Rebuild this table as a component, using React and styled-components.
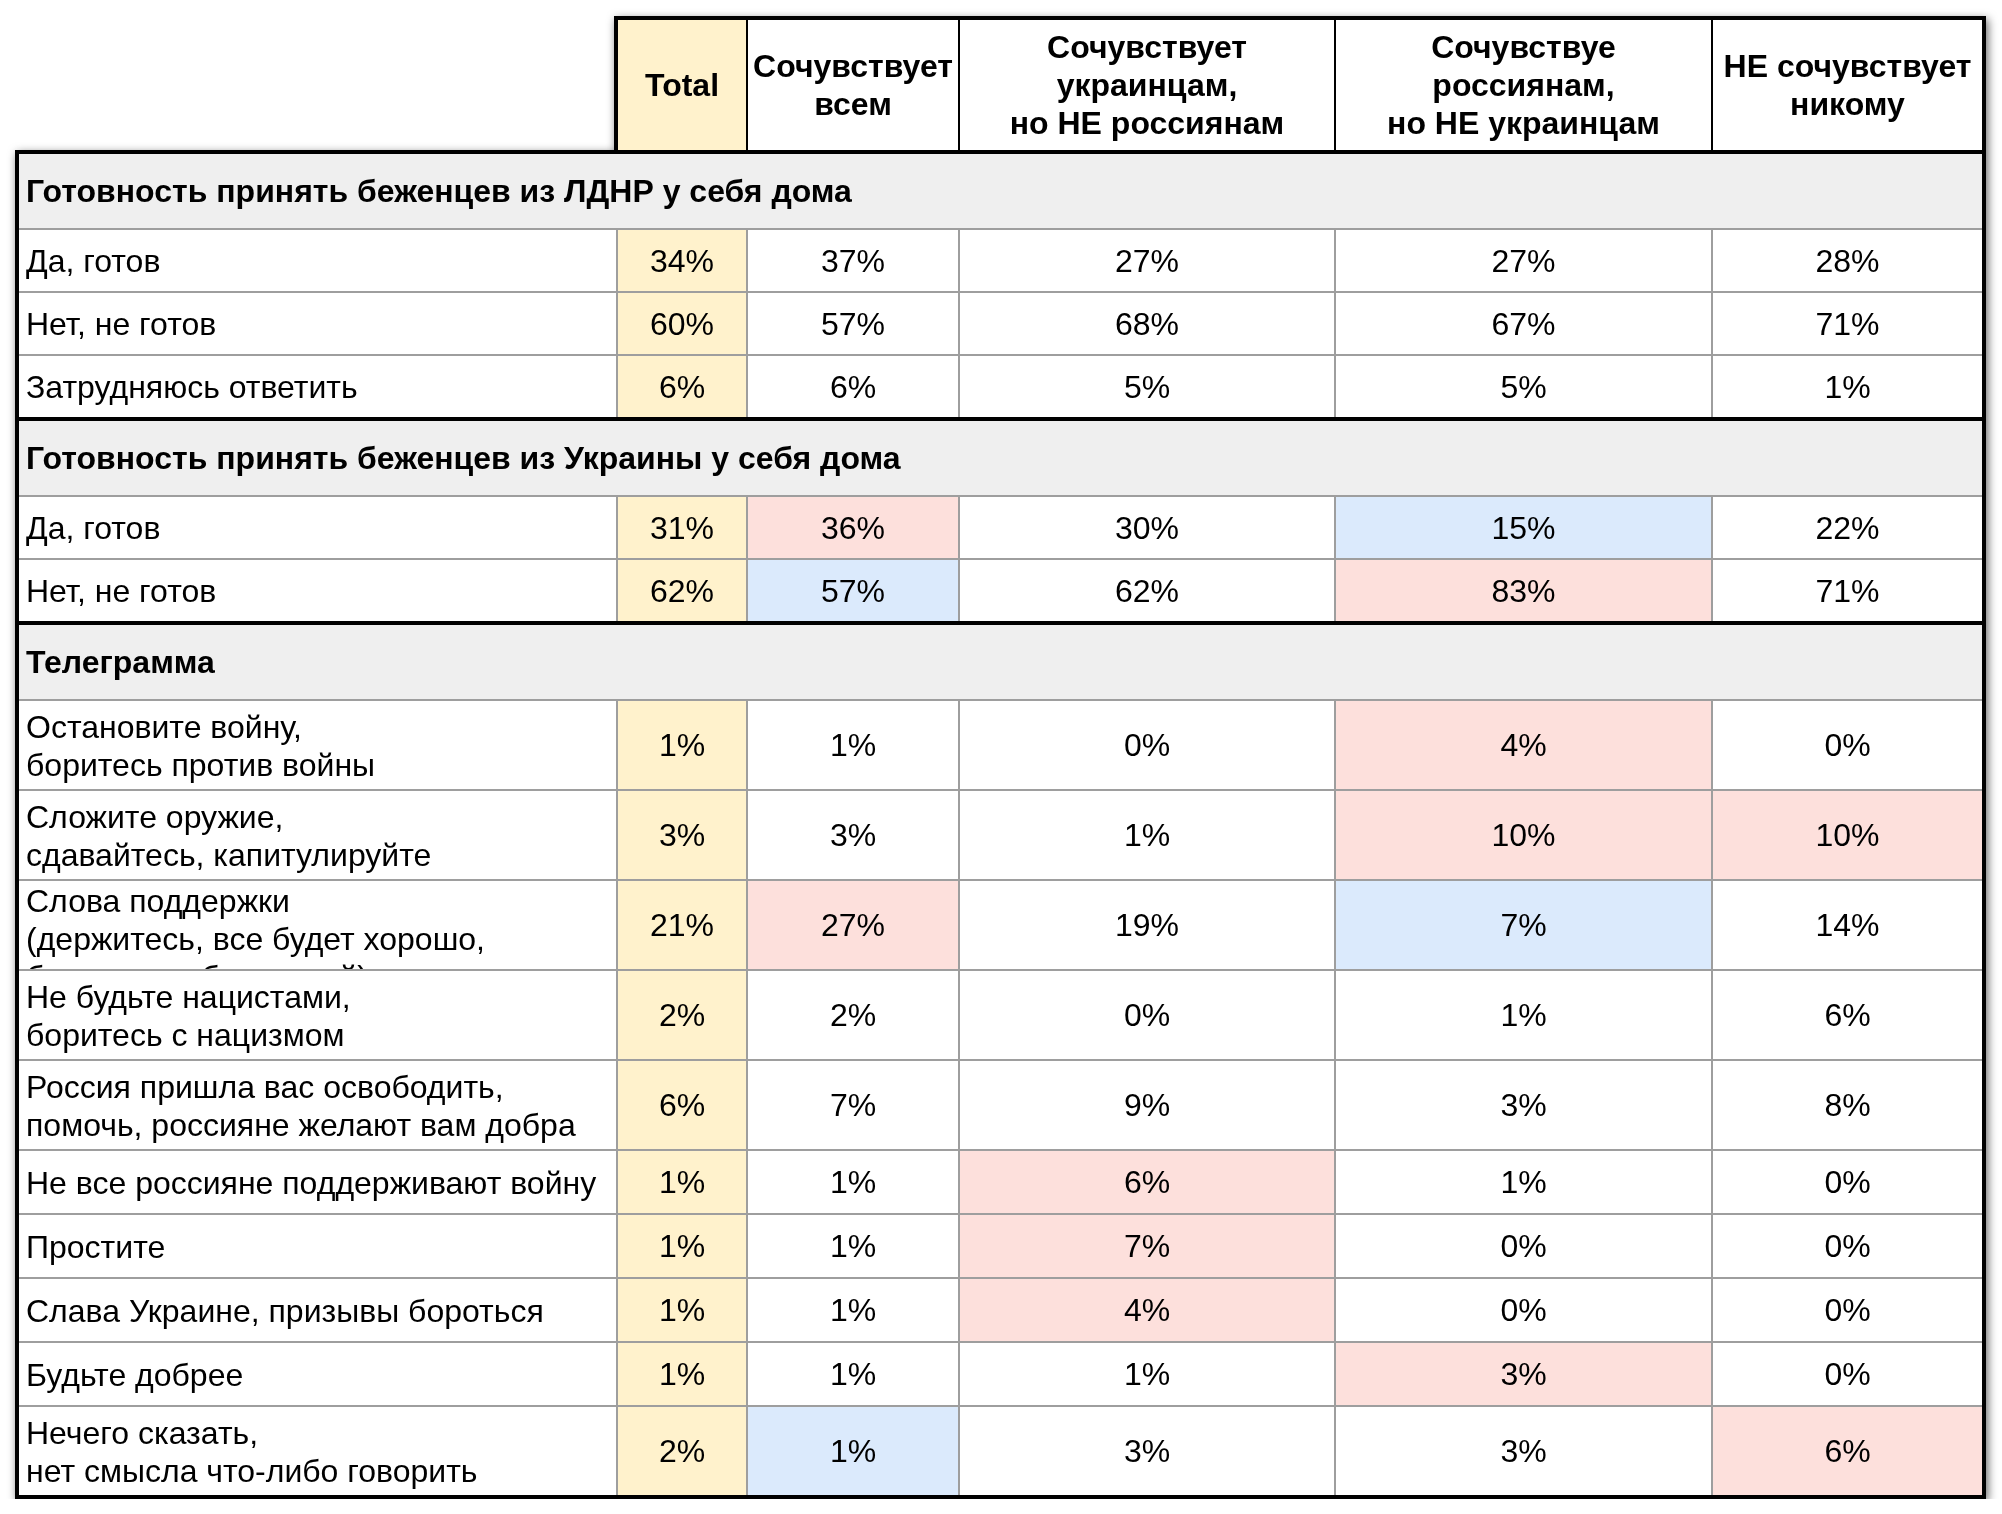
import styled, { createGlobalStyle } from "styled-components";

const GlobalStyle = createGlobalStyle`
  html, body {
    margin: 0;
    padding: 0;
    background: #fff;
  }
  body {
    font-family: "Liberation Sans", Arial, sans-serif;
    color: #000;
  }
`;

const COLS = "597px 130px 212px 376px 377px 271px";
const GRID = "#9e9e9e";

const TONES = {
  total: "#fff2cc",
  pink: "#fde0dc",
  blue: "#dbeafc",
};

const Page = styled.div`
  padding: 16px 0 0 15px;
`;

const Frame = styled.div`
  display: flex;
  flex-direction: column;
  align-items: flex-start;
  width: fit-content;
  filter: drop-shadow(2px 3px 5px rgba(0, 0, 0, 0.6));
`;

const HeaderBox = styled.div`
  margin-left: 599px;
  display: grid;
  grid-template-columns: 128px 212px 376px 377px 271px;
  height: 134px;
  box-sizing: border-box;
  border: 4px solid #000;
  border-bottom: none;
  background: #fff;
`;

const HeadCell = styled.div`
  display: flex;
  align-items: center;
  justify-content: center;
  text-align: center;
  font-size: 32px;
  line-height: 38px;
  font-weight: 700;
  white-space: nowrap;
  overflow: hidden;
  background: ${(p) => (p.$total ? TONES.total : "#fff")};
  & + & {
    border-left: 2px solid #000;
  }
`;

const Table = styled.div`
  width: 1971px;
  box-sizing: border-box;
  border: 4px solid #000;
  background: #fff;
`;

const SectionTitle = styled.div`
  height: ${(p) => (p.$first ? 74 : 78)}px;
  box-sizing: border-box;
  border-top: ${(p) => (p.$first ? "none" : "4px solid #000")};
  background: #efefef;
  display: flex;
  align-items: center;
  padding: 1px 0 0 7px;
  font-size: 32px;
  font-weight: 700;
  white-space: nowrap;
`;

const Row = styled.div`
  display: grid;
  grid-template-columns: ${COLS};
  height: ${(p) => p.$h}px;
  box-sizing: border-box;
  border-top: 2px solid ${GRID};
`;

const Label = styled.div`
  display: flex;
  align-items: ${(p) => (p.$top ? "flex-start" : "center")};
  padding: ${(p) => (p.$top ? "1px 0 0 7px" : "1px 0 0 7px")};
  font-size: 32px;
  line-height: 38px;
  white-space: nowrap;
  overflow: hidden;
`;

const Value = styled.div`
  display: flex;
  align-items: center;
  justify-content: center;
  padding-top: 1px;
  border-left: 2px solid ${GRID};
  font-size: 32px;
  background: ${(p) => TONES[p.$tone] || "#fff"};
`;

const headers = [
  ["Total"],
  ["Сочувствует", "всем"],
  ["Сочувствует", "украинцам,", "но НЕ россиянам"],
  ["Сочувствуе", "россиянам,", "но НЕ украинцам"],
  ["НЕ сочувствует", "никому"],
];

const sections = [
  {
    title: "Готовность принять беженцев из ЛДНР у себя дома",
    rows: [
      { label: ["Да, готов"], h: 63, vals: ["34%", "37%", "27%", "27%", "28%"] },
      { label: ["Нет, не готов"], h: 63, vals: ["60%", "57%", "68%", "67%", "71%"] },
      { label: ["Затрудняюсь ответить"], h: 63, vals: ["6%", "6%", "5%", "5%", "1%"] },
    ],
  },
  {
    title: "Готовность принять беженцев из Украины у себя дома",
    rows: [
      {
        label: ["Да, готов"],
        h: 63,
        vals: ["31%", "36%", "30%", "15%", "22%"],
        tones: [null, "pink", null, "blue", null],
      },
      {
        label: ["Нет, не готов"],
        h: 63,
        vals: ["62%", "57%", "62%", "83%", "71%"],
        tones: [null, "blue", null, "pink", null],
      },
    ],
  },
  {
    title: "Телеграмма",
    rows: [
      {
        label: ["Остановите войну,", "боритесь против войны"],
        h: 90,
        vals: ["1%", "1%", "0%", "4%", "0%"],
        tones: [null, null, null, "pink", null],
      },
      {
        label: ["Сложите оружие,", "сдавайтесь, капитулируйте"],
        h: 90,
        vals: ["3%", "3%", "1%", "10%", "10%"],
        tones: [null, null, null, "pink", "pink"],
      },
      {
        label: ["Слова поддержки", "(держитесь, все будет хорошо,", "берегите себя и детей)"],
        h: 90,
        top: true,
        vals: ["21%", "27%", "19%", "7%", "14%"],
        tones: [null, "pink", null, "blue", null],
      },
      {
        label: ["Не будьте нацистами,", "боритесь с нацизмом"],
        h: 90,
        vals: ["2%", "2%", "0%", "1%", "6%"],
      },
      {
        label: ["Россия пришла вас освободить,", "помочь, россияне желают вам добра"],
        h: 90,
        vals: ["6%", "7%", "9%", "3%", "8%"],
      },
      {
        label: ["Не все россияне поддерживают войну"],
        h: 64,
        vals: ["1%", "1%", "6%", "1%", "0%"],
        tones: [null, null, "pink", null, null],
      },
      {
        label: ["Простите"],
        h: 64,
        vals: ["1%", "1%", "7%", "0%", "0%"],
        tones: [null, null, "pink", null, null],
      },
      {
        label: ["Слава Украине, призывы бороться"],
        h: 64,
        vals: ["1%", "1%", "4%", "0%", "0%"],
        tones: [null, null, "pink", null, null],
      },
      {
        label: ["Будьте добрее"],
        h: 64,
        vals: ["1%", "1%", "1%", "3%", "0%"],
        tones: [null, null, null, "pink", null],
      },
      {
        label: ["Нечего сказать,", "нет смысла что-либо говорить"],
        h: 90,
        vals: ["2%", "1%", "3%", "3%", "6%"],
        tones: [null, "blue", null, null, "pink"],
      },
    ],
  },
];

function Lines({ lines }) {
  return (
    <div>
      {lines.map((line, i) => (
        <div key={i}>{line}</div>
      ))}
    </div>
  );
}

function DataRow({ row }) {
  return (
    <Row $h={row.h}>
      <Label $top={row.top}>
        <Lines lines={row.label} />
      </Label>
      {row.vals.map((v, i) => (
        <Value key={i} $tone={i === 0 ? "total" : row.tones && row.tones[i]}>
          {v}
        </Value>
      ))}
    </Row>
  );
}

export default function App() {
  return (
    <Page>
      <GlobalStyle />
      <Frame>
        <HeaderBox>
          {headers.map((h, i) => (
            <HeadCell key={i} $total={i === 0}>
              <Lines lines={h} />
            </HeadCell>
          ))}
        </HeaderBox>
        <Table>
          {sections.map((s, si) => (
            <div key={si}>
              <SectionTitle $first={si === 0}>{s.title}</SectionTitle>
              {s.rows.map((r, ri) => (
                <DataRow key={ri} row={r} />
              ))}
            </div>
          ))}
        </Table>
      </Frame>
    </Page>
  );
}
